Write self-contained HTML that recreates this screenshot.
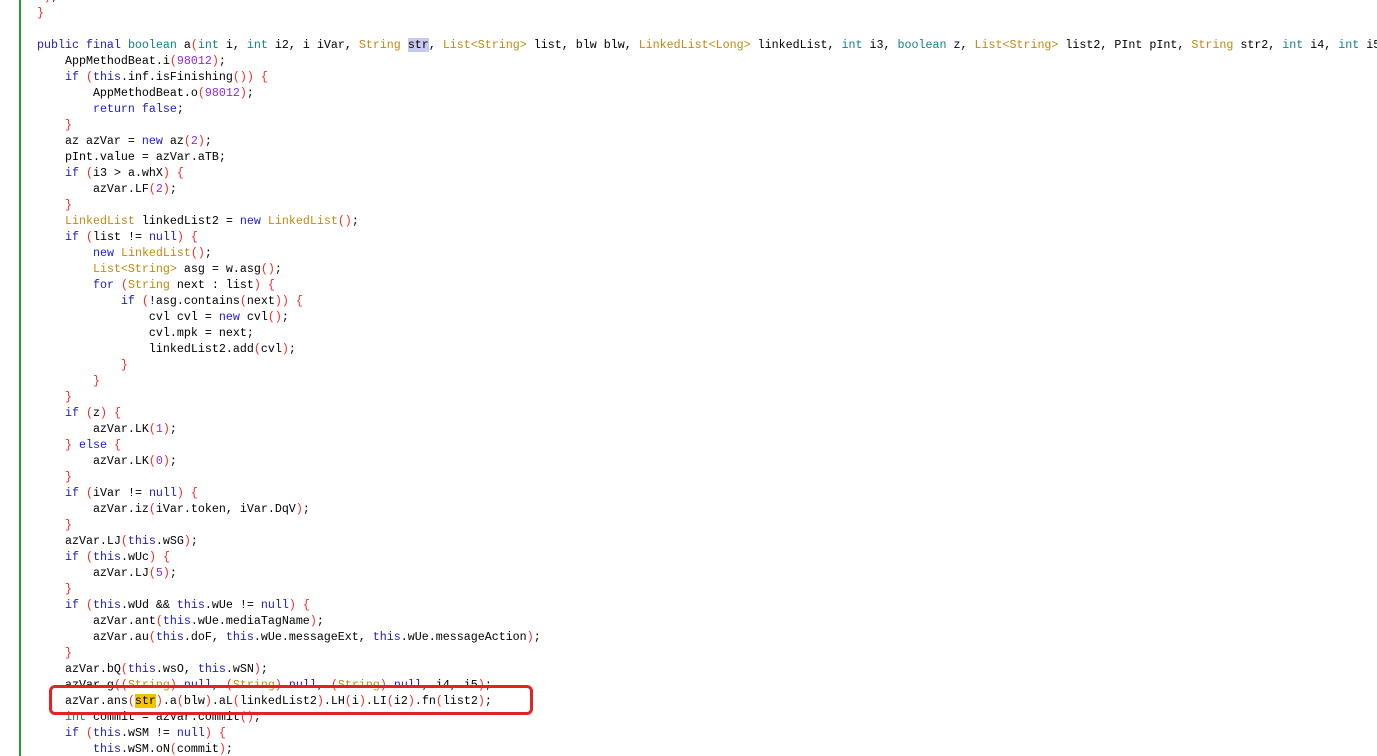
<!DOCTYPE html>
<html><head><meta charset="utf-8"><style>
html,body{margin:0;padding:0;background:#fff;width:1377px;height:756px;overflow:hidden;position:relative}
pre{position:absolute;left:9px;top:-11px;margin:0;font-family:"Liberation Mono",monospace;font-size:11.67px;line-height:16px;color:#000;white-space:pre}
.k{color:#1c1cc8;font-weight:normal}
.t{color:#14808a}
.c{color:#c08a10}
.n{color:#8a2be2}
.p{color:#f02c2c}
.h{background:#c8c8f0}
.y{background:#f5c400}
#gl{position:absolute;left:19px;top:0;width:2px;height:756px;background:#2a9a2a}
#box{position:absolute;left:49px;top:685px;width:478px;height:24px;border:3px solid #e02424;border-radius:6px}
</style></head><body>
<div id="gl"></div>
<pre>     <span class="p">)</span>;
    <span class="p">}</span>

    <span class="k">public final</span> <span class="t">boolean</span> a<span class="p">(</span><span class="t">int</span> i, <span class="t">int</span> i2, i iVar, <span class="c">String</span> <span class="h">str</span>, <span class="c">List&lt;String&gt;</span> list, blw blw, <span class="c">LinkedList&lt;Long&gt;</span> linkedList, <span class="t">int</span> i3, <span class="t">boolean</span> z, <span class="c">List&lt;String&gt;</span> list2, PInt pInt, <span class="c">String</span> str2, <span class="t">int</span> i4, <span class="t">int</span> i5
        AppMethodBeat.i<span class="p">(</span><span class="n">98012</span><span class="p">)</span>;
        <span class="k">if</span> <span class="p">(</span><span class="k">this</span>.inf.isFinishing<span class="p">())</span> <span class="p">{</span>
            AppMethodBeat.o<span class="p">(</span><span class="n">98012</span><span class="p">)</span>;
            <span class="k">return false</span>;
        <span class="p">}</span>
        az azVar = <span class="k">new</span> az<span class="p">(</span><span class="n">2</span><span class="p">)</span>;
        pInt.value = azVar.aTB;
        <span class="k">if</span> <span class="p">(</span>i3 &gt; a.whX<span class="p">)</span> <span class="p">{</span>
            azVar.LF<span class="p">(</span><span class="n">2</span><span class="p">)</span>;
        <span class="p">}</span>
        <span class="c">LinkedList</span> linkedList2 = <span class="k">new</span> <span class="c">LinkedList</span><span class="p">()</span>;
        <span class="k">if</span> <span class="p">(</span>list != <span class="k">null</span><span class="p">)</span> <span class="p">{</span>
            <span class="k">new</span> <span class="c">LinkedList</span><span class="p">()</span>;
            <span class="c">List&lt;String&gt;</span> asg = w.asg<span class="p">()</span>;
            <span class="k">for</span> <span class="p">(</span><span class="c">String</span> next : list<span class="p">)</span> <span class="p">{</span>
                <span class="k">if</span> <span class="p">(</span>!asg.contains<span class="p">(</span>next<span class="p">))</span> <span class="p">{</span>
                    cvl cvl = <span class="k">new</span> cvl<span class="p">()</span>;
                    cvl.mpk = next;
                    linkedList2.add<span class="p">(</span>cvl<span class="p">)</span>;
                <span class="p">}</span>
            <span class="p">}</span>
        <span class="p">}</span>
        <span class="k">if</span> <span class="p">(</span>z<span class="p">)</span> <span class="p">{</span>
            azVar.LK<span class="p">(</span><span class="n">1</span><span class="p">)</span>;
        <span class="p">}</span> <span class="k">else</span> <span class="p">{</span>
            azVar.LK<span class="p">(</span><span class="n">0</span><span class="p">)</span>;
        <span class="p">}</span>
        <span class="k">if</span> <span class="p">(</span>iVar != <span class="k">null</span><span class="p">)</span> <span class="p">{</span>
            azVar.iz<span class="p">(</span>iVar.token, iVar.DqV<span class="p">)</span>;
        <span class="p">}</span>
        azVar.LJ<span class="p">(</span><span class="k">this</span>.wSG<span class="p">)</span>;
        <span class="k">if</span> <span class="p">(</span><span class="k">this</span>.wUc<span class="p">)</span> <span class="p">{</span>
            azVar.LJ<span class="p">(</span><span class="n">5</span><span class="p">)</span>;
        <span class="p">}</span>
        <span class="k">if</span> <span class="p">(</span><span class="k">this</span>.wUd &amp;&amp; <span class="k">this</span>.wUe != <span class="k">null</span><span class="p">)</span> <span class="p">{</span>
            azVar.ant<span class="p">(</span><span class="k">this</span>.wUe.mediaTagName<span class="p">)</span>;
            azVar.au<span class="p">(</span><span class="k">this</span>.doF, <span class="k">this</span>.wUe.messageExt, <span class="k">this</span>.wUe.messageAction<span class="p">)</span>;
        <span class="p">}</span>
        azVar.bQ<span class="p">(</span><span class="k">this</span>.wsO, <span class="k">this</span>.wSN<span class="p">)</span>;
        azVar.g<span class="p">((</span><span class="c">String</span><span class="p">)</span> <span class="k">null</span>, <span class="p">(</span><span class="c">String</span><span class="p">)</span> <span class="k">null</span>, <span class="p">(</span><span class="c">String</span><span class="p">)</span> <span class="k">null</span>, i4, i5<span class="p">)</span>;
        azVar.ans<span class="p">(</span><span class="y">str</span><span class="p">)</span>.a<span class="p">(</span>blw<span class="p">)</span>.aL<span class="p">(</span>linkedList2<span class="p">)</span>.LH<span class="p">(</span>i<span class="p">)</span>.LI<span class="p">(</span>i2<span class="p">)</span>.fn<span class="p">(</span>list2<span class="p">)</span>;
        <span class="t">int</span> commit = azVar.commit<span class="p">()</span>;
        <span class="k">if</span> <span class="p">(</span><span class="k">this</span>.wSM != <span class="k">null</span><span class="p">)</span> <span class="p">{</span>
            <span class="k">this</span>.wSM.oN<span class="p">(</span>commit<span class="p">)</span>;
</pre>
<div id="box"></div>
</body></html>
